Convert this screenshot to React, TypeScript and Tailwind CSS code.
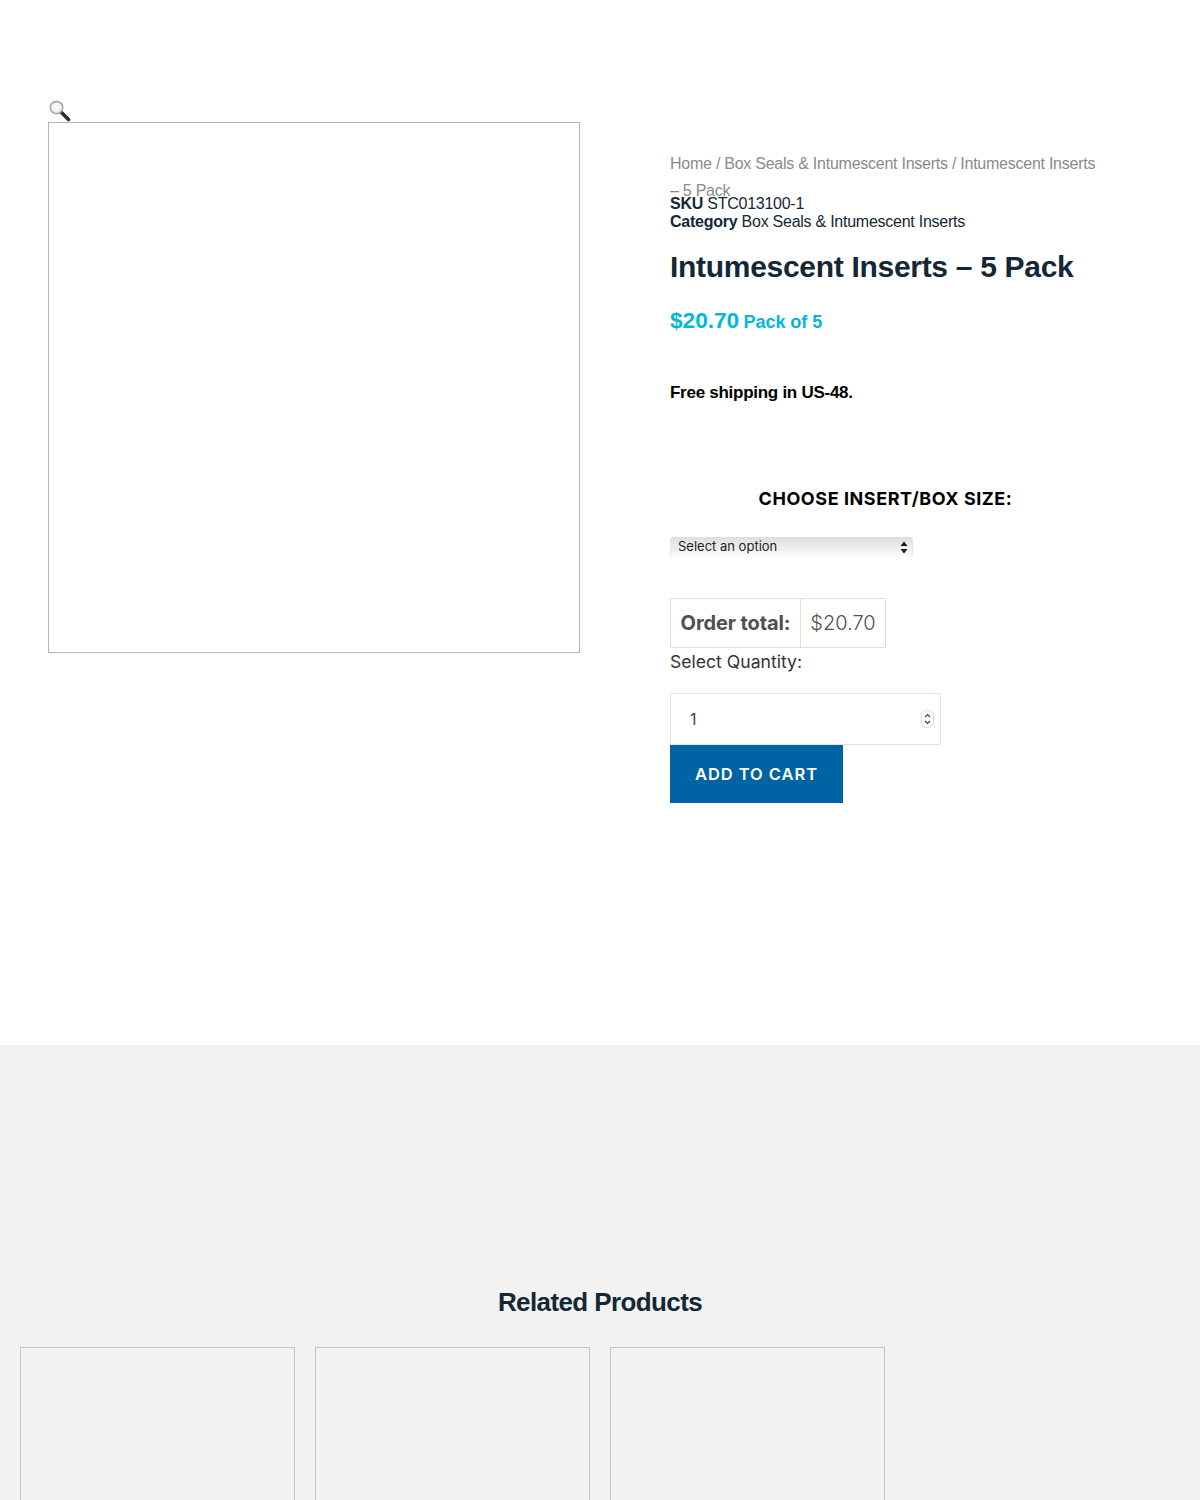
export default function App() {
  return (
    <div className="min-h-[1500px] h-[1500px] overflow-hidden bg-white font-['Liberation_Sans',sans-serif]">
      {/* Product */}
      <section className="h-[1045px] flex items-start pl-[48px] pt-[100px]">
        <div className="w-[532px] shrink-0">
          <svg width="24" height="22" viewBox="0 0 24 22" className="block">
            <defs>
              <radialGradient id="lens" cx="45%" cy="40%" r="60%">
                <stop offset="0%" stopColor="#ffffff" />
                <stop offset="100%" stopColor="#e4e8ee" />
              </radialGradient>
            </defs>
            <line x1="13" y1="12" x2="20.5" y2="19.5" stroke="#2d2d2d" strokeWidth="3.6" strokeLinecap="round" />
            <circle cx="8.5" cy="7.5" r="6.2" fill="url(#lens)" stroke="#a9abae" strokeWidth="1.7" />
          </svg>
          <div className="h-[531px] border border-[#b5b5b5] bg-white" />
        </div>

        <div className="ml-[90px] w-[440px] pt-[50px]">
          <nav className="w-[432px] h-[45px] text-[16px] leading-[27px] text-[#8a8a8a] tracking-[-0.25px]">
            Home / Box Seals &amp; Intumescent Inserts / Intumescent Inserts – 5 Pack
          </nav>
          <div className="text-[16px] leading-[18px] text-[#142736] tracking-[-0.25px]">
            <div><b>SKU</b> STC013100-1</div>
            <div><b>Category</b> Box Seals &amp; Intumescent Inserts</div>
          </div>
          <h1 className="mt-[16px] text-[30px] leading-[40px] font-bold text-[#142736] tracking-[-0.3px]">
            Intumescent Inserts – 5 Pack
          </h1>
          <p className="mt-[19px] font-bold text-[#00b8d9] leading-[30px]">
            <span className="text-[22.6px]">$20.70</span> <span className="text-[18px] tracking-[-0.05px]">Pack of 5</span>
          </p>
          <p className="mt-[43px] text-[17px] leading-[24px] font-bold text-black tracking-[-0.27px]">Free shipping in US-48.</p>

          <h3 className="mt-[82px] w-[431px] text-center font-['Inter',sans-serif] text-[18px] leading-[24px] font-bold tracking-[0.56px] text-black">
            CHOOSE INSERT/BOX SIZE:
          </h3>

          <div className="relative mt-[26px] w-[243px] h-[20px]">
            <select className="block w-full h-full appearance-none rounded-[3px] border-x border-[#e6e6e6] bg-gradient-to-b from-[#dedede] to-[#fbfbfb] pl-[7px] font-['Inter',sans-serif] text-[13px] text-[#222]">
              <option>Select an option</option>
            </select>
            <svg width="8" height="13" viewBox="0 0 8 13" className="absolute right-[5px] top-[4px]">
              <path d="M4 0.5L7.5 5H0.5Z M4 12.5L0.5 8H7.5Z" fill="#1a1a1a" />
            </svg>
          </div>

          <div className="mt-[41px] flex w-[216px] h-[50px] border border-[#e3dfd6] font-['Inter',sans-serif] text-[20px] text-[#4f4f4f]">
            <div className="w-[130px] flex items-center justify-center border-r border-[#e3dfd6] font-bold tracking-[-0.1px]">Order total:</div>
            <div className="flex-1 flex items-center justify-center font-light">$20.70</div>
          </div>
          <div className="font-['Inter',sans-serif] text-[17.6px] leading-[27px] text-[#333]">Select Quantity:</div>

          <div className="relative mt-[18px] w-[271px] h-[52px] border border-[#e8e4dc] bg-white">
            <input
              readOnly
              value="1"
              className="w-full h-full pl-[19px] font-['Inter',sans-serif] text-[16px] text-[#444] outline-none"
            />
            <svg width="13" height="18" viewBox="0 0 13 18" className="absolute right-[6px] top-[16px]">
              <rect x="0.5" y="0.5" width="12" height="17" rx="5" fill="#fff" stroke="#dcdcdc" />
              <path d="M4 7L6.5 4.5L9 7M4 11L6.5 13.5L9 11" fill="none" stroke="#444" strokeWidth="1.2" />
            </svg>
          </div>
          <button className="block w-[173px] h-[58px] bg-[#0064a4] font-['Inter',sans-serif] text-[16.5px] font-semibold tracking-[0.95px] text-white">
            ADD TO CART
          </button>
        </div>
      </section>

      {/* Related */}
      <section className="h-[455px] bg-[#f2f2f2] pt-[240px]">
        <h2 className="text-center text-[26px] leading-[34px] font-bold text-[#142736] tracking-[-0.6px]">Related Products</h2>
        <div className="mt-[28px] flex gap-[20px] pl-[20px]">
          <div className="w-[275px] h-[300px] border border-[#c4c4c4]" />
          <div className="w-[275px] h-[300px] border border-[#c4c4c4]" />
          <div className="w-[275px] h-[300px] border border-[#c4c4c4]" />
        </div>
      </section>
    </div>
  );
}
